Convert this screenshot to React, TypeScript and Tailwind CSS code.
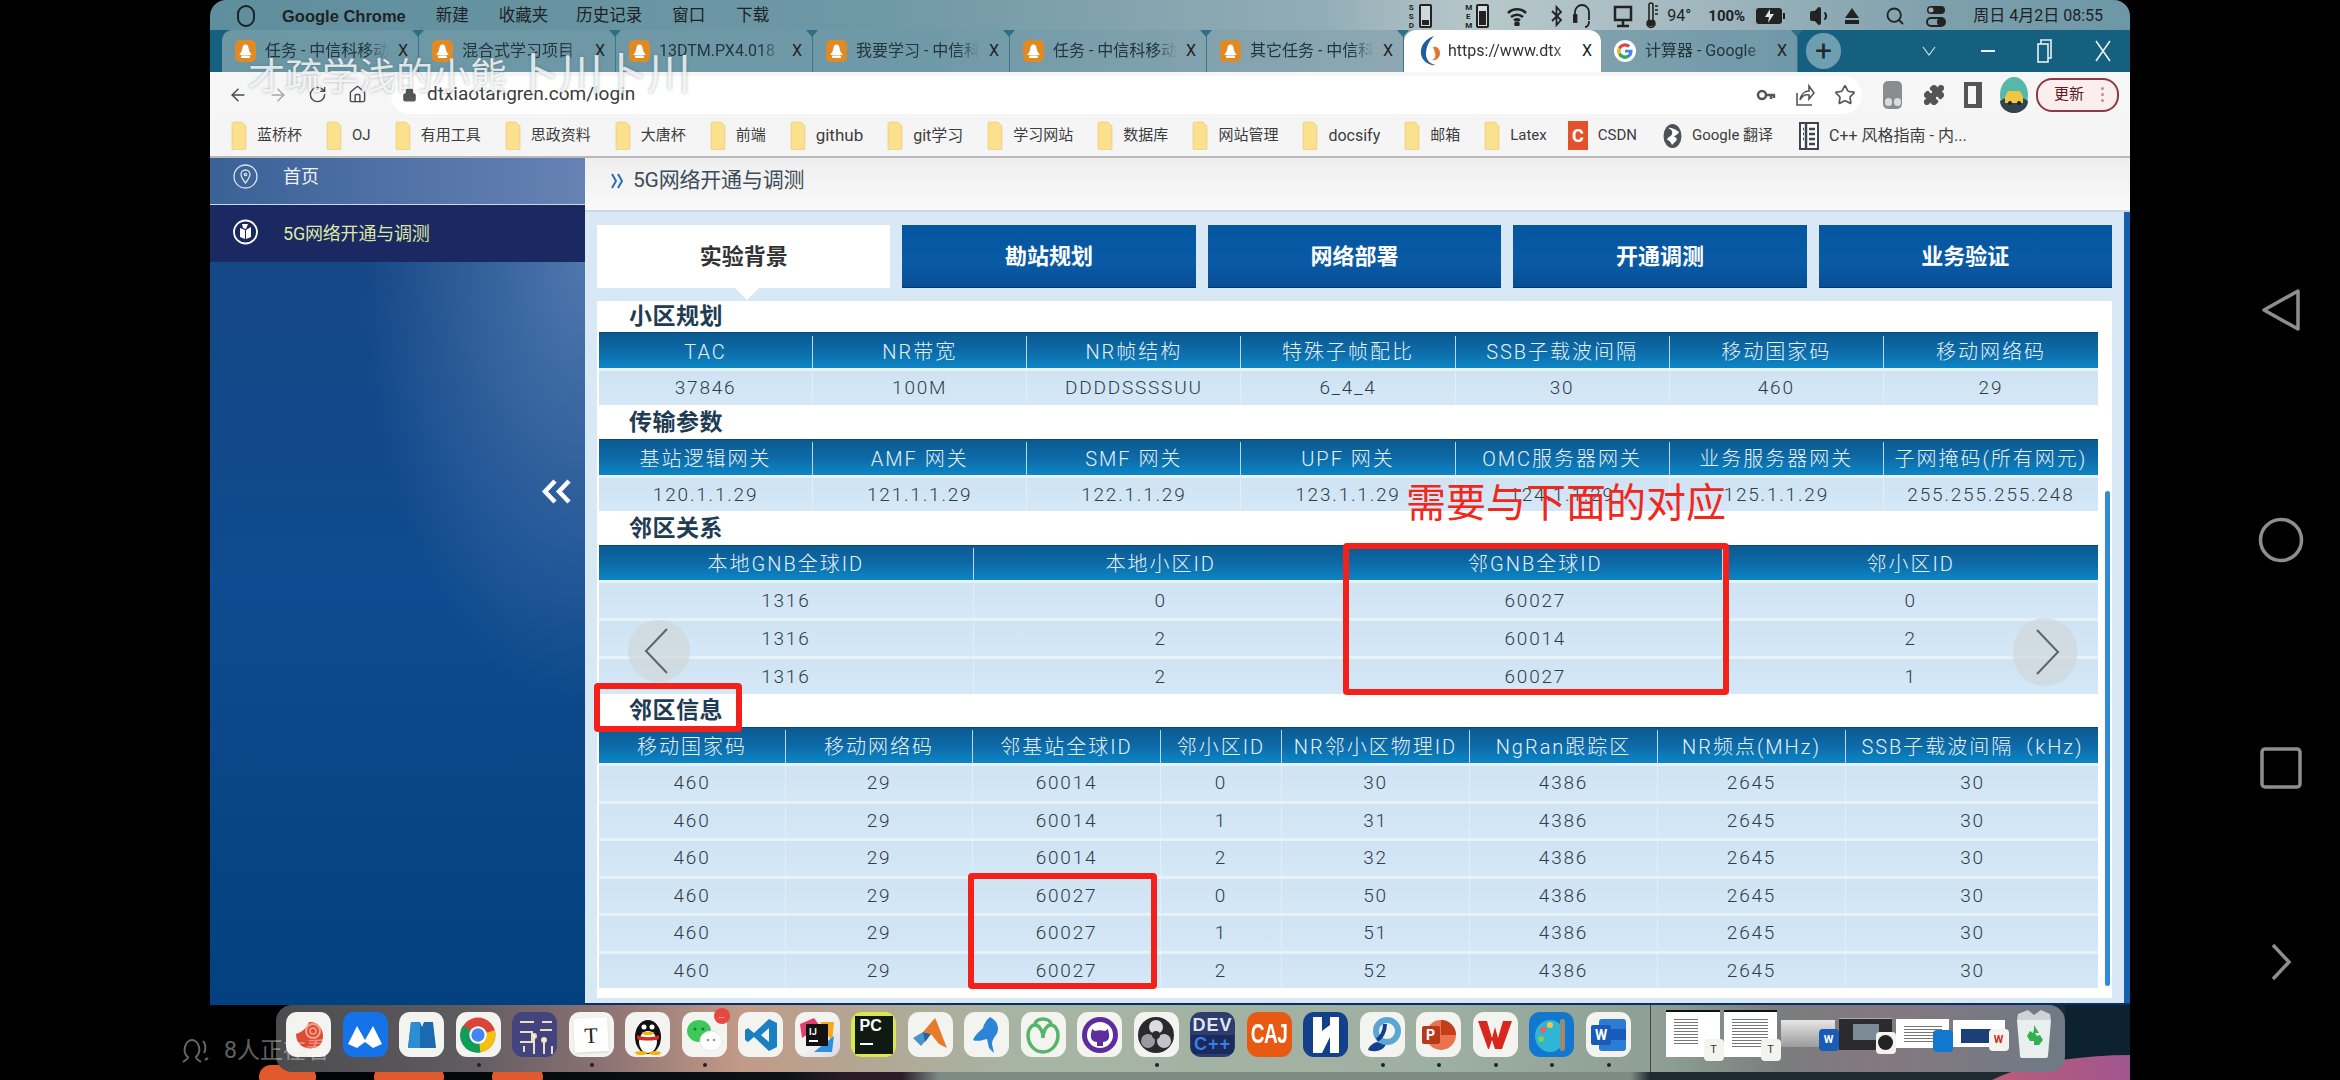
import React from "react";
import { ArrowLeft, ArrowRight, RotateCw, Home, Lock, Star, Puzzle, Search, Volume1 } from "lucide-react";

const Bell = () => (
  <span className="w-[21px] h-[22px] rounded-[5px] bg-[#df8a22] flex items-center justify-center shrink-0">
    <svg width="17" height="17" viewBox="0 0 17 17"><path d="M8.5 1.5c2 0 3 2 3.3 4.5.3 2.500 1.600 4 3 6H2.200c1.400-2 2.700-3.500 3-6 .3-2.500 1.300-4.500 3.300-4.500z" fill="#fff" /><rect x="4" y="12.500" width="9" height="2.500" rx="1" fill="#fff" /></svg>
  </span>
);

const SwirlLogo = () => (
  <svg width="22" height="34" viewBox="0 0 22 34" className="shrink-0">
    <path d="M15 2C6 5 1 12 2 20c1 7 8 12 15 11-6-1-10-5-10-11 0-7 3-13 8-18z" fill="#1f5f9e" />
    <path d="M14 13c4-1 7 2 7 6 0 5-4 8-8 7 3-1 4-4 3-7-.5-2-1-4-2-6z" fill="#e4762b" />
  </svg>
);

const GoogleG = ({ s = 22 }: { s?: number }) => (
  <svg width={s} height={s} viewBox="0 0 24 24" className="shrink-0">
    <circle cx="12" cy="12" r="12" fill="#fff" />
    <path d="M20 10.500h-8v3.200h4.600c-.6 2-2.300 3.300-4.600 3.300a5 5 0 1 1 3.200-8.800l2.300-2.300A8.300 8.300 0 1 0 20.300 12c0-.5 0-1-.3-1.500z" fill="#4285f4" />
    <path d="M4.600 8l2.700 2A5 5 0 0 1 15.200 8.200l2.300-2.300A8.300 8.300 0 0 0 4.600 8z" fill="#ea4335" />
    <path d="M4.600 16l2.700-2a5 5 0 0 0 7.600 2.300l2.500 2A8.300 8.300 0 0 1 4.600 16z" fill="#34a853" />
    <path d="M3.700 12c0-1.500.4-2.900.9-4l2.700 2a5 5 0 0 0 0 4l-2.700 2a8.300 8.300 0 0 1-.9-4z" fill="#fbbc05" />
  </svg>
);

const tabs: { title: string; icon: React.ReactNode; active?: boolean }[] = [
  { title: "任务 - 中信科移动", icon: <Bell /> },
  { title: "混合式学习项目", icon: <Bell /> },
  { title: "13DTM.PX4.018", icon: <Bell /> },
  { title: "我要学习 - 中信科", icon: <Bell /> },
  { title: "任务 - 中信科移动", icon: <Bell /> },
  { title: "其它任务 - 中信科", icon: <Bell /> },
  { title: "https://www.dtx", icon: <SwirlLogo />, active: true },
  { title: "计算器 - Google", icon: <GoogleG /> },
];

const Folder = () => (
  <svg width="16" height="29" viewBox="0 0 16 29" className="shrink-0">
    <path d="M1 2.500A1.500 1.500 0 0 1 2.500 1H11l4 4v22.500a1 1 0 0 1-1 1H2a1 1 0 0 1-1-1z" fill="#fbe08e" stroke="#e6c873" strokeWidth="0.6" />
  </svg>
);

const bookmarks: { t: string; c?: string }[] = [
  { t: "蓝桥杯" }, { t: "OJ" }, { t: "有用工具" }, { t: "思政资料" }, { t: "大唐杯" }, { t: "前端" },
  { t: "github", c: "text-[17px]" }, { t: "git学习", c: "text-[16px]" }, { t: "学习网站" }, { t: "数据库" }, { t: "网站管理" },
  { t: "docsify", c: "text-[16px]" }, { t: "邮箱" }, { t: "Latex" },
];

const Bookmarks = () => (
  <div className="h-[43px] bg-[#f5f5f5] border-b-2 border-[#b9b9b9] flex items-center pl-[21px] gap-[24px] text-[15px] text-[#3d3d3d] overflow-hidden whitespace-nowrap">
    {bookmarks.map((b) => (
      <div key={b.t} className="flex items-center gap-[10px]">
        <Folder />
        <span className={b.c}>{b.t}</span>
      </div>
    ))}
    <div className="flex items-center gap-[10px] -ml-[3px]">
      <span className="w-[20px] h-[29px] bg-[#e2532c] text-white text-[18px] font-bold flex items-center justify-center">C</span>
      <span>CSDN</span>
    </div>
    <div className="flex items-center gap-[10px] ml-[2px]">
      <svg width="19" height="26" viewBox="0 0 19 26"><ellipse cx="9.500" cy="13" rx="9" ry="12" fill="#4d5257" /><path d="M5 5c3 1 5 3 4 6s-4 2-5 6c2 0 4 2 5 5l4-4c2-2 0-4-2-4 1-2 4-2 5-5-3-2-7-5-11-4z" fill="#fff" /></svg>
      <span>Google 翻译</span>
    </div>
    <div className="flex items-center gap-[10px] ml-[2px]">
      <svg width="20" height="28" viewBox="0 0 20 28"><rect x="1" y="1" width="18" height="26" fill="#fff" stroke="#3c4650" strokeWidth="2" /><path d="M7 1v26M4 7h1M4 12h1M4 17h1M10 7h6M10 12h6M10 17h6M10 22h6" stroke="#3c4650" strokeWidth="2.500" /></svg>
      <span className="text-[16px]">C++ 风格指南 - 内...</span>
    </div>
  </div>
);

const StatusBar = ({ label, fill }: { label: string; fill: string }) => (
  <div className="flex items-center gap-[5px]">
    <span className="text-[8px] leading-[9px] font-bold w-[6px] text-center whitespace-pre-line">{label}</span>
    <span className="w-[13px] h-[24px] border-2 border-[#222] rounded-[2px] flex items-end bg-white/40 p-[1px]">
      <span className={`w-full bg-[#222] ${fill}`} />
    </span>
  </div>
);

const MenuBar = () => (
  <div className="h-[30px] flex items-center pl-[27px] pr-[27px] text-[16.500px] text-[#1c2225] bg-[linear-gradient(90deg,#5f8e9c_0%,#6f98a5_35%,#93adb6_58%,#b7c8cb_66%,#a8bcc2_75%,#7ea0ac_90%,#6d97a6_100%)] whitespace-nowrap rounded-t-[16px] pt-[2px]">
    <span className="w-[18px] h-[22px] rounded-full border-2 border-[#1c2225] shrink-0" />
    <span className="ml-[27px] font-bold text-[16.500px] [font-family:'Liberation_Sans',sans-serif]">Google Chrome</span>
    <span className="ml-[30px]">新建</span>
    <span className="ml-[30px]">收藏夹</span>
    <span className="ml-[28px]">历史记录</span>
    <span className="ml-[30px]">窗口</span>
    <span className="ml-[31px]">下载</span>
    <div className="ml-auto flex items-center text-[16px]">
      <StatusBar label={"S\nS\nD"} fill="h-[5px]" />
      <div className="ml-[33px]"><StatusBar label={"M\nE\nM"} fill="h-[14px]" /></div>
      <svg className="ml-[18px]" width="20" height="20" viewBox="0 0 20 20" fill="none" stroke="#222" strokeWidth="2.500"><path d="M1 7c5-5 13-5 18 0M4 11c3.500-3 8.500-3 12 0M7 14.500c2-1.500 4-1.500 6 0" /><circle cx="10" cy="18" r="1.500" fill="#222" /></svg>
      <svg className="ml-[24px]" width="11" height="22" viewBox="0 0 11 22" fill="none" stroke="#222" strokeWidth="1.800"><path d="M1 6l9 9-4.500 5V2L10 7l-9 9" /></svg>
      <svg className="ml-[11px]" width="18" height="28" viewBox="0 0 18 28" fill="none" stroke="#222" strokeWidth="1.800"><path d="M2 18V10a7 7 0 0 1 14 0v8M12 25c3 0 4-2 4-6" /><rect x="0.500" y="13" width="3" height="7" fill="#222" /></svg>
      <svg className="ml-[22px]" width="20" height="24" viewBox="0 0 20 24" fill="none" stroke="#222" strokeWidth="2.500"><rect x="2" y="3" width="16" height="13" /><path d="M10 16v5M4 22h12" /></svg>
      <svg className="ml-[12px]" width="14" height="28" viewBox="0 0 14 28" fill="none" stroke="#222" strokeWidth="1.600"><path d="M4 3a2 2 0 0 1 4 0v15a4 4 0 1 1-4 0z" /><circle cx="6" cy="21" r="2.500" fill="#222" /><path d="M10 4h3M10 8h3M10 12h3" /></svg>
      <span className="ml-[8px] text-[16px]">94°</span>
      <span className="ml-[17px] font-bold text-[15px]">100%</span>
      <svg className="ml-[11px]" width="30" height="18" viewBox="0 0 30 18"><rect x="0" y="1" width="26" height="16" rx="3" fill="#222" /><rect x="27" y="6" width="2" height="6" fill="#222" /><path d="M14 2l-5 8h4l-1 6 6-9h-4z" fill="#d9e2e4" /></svg>
      <Volume1 className="ml-[23px]" size={24} color="#222" fill="#222" />
      <svg className="ml-[11px]" width="16" height="18" viewBox="0 0 16 18"><path d="M8 1l7 10H1z" fill="#222" /><rect x="1" y="13" width="14" height="4" fill="#222" /></svg>
      <Search className="ml-[25px]" size={20} color="#222" strokeWidth={2.200} />
      <svg className="ml-[21px]" width="20" height="24" viewBox="0 0 20 24"><rect x="1" y="2" width="18" height="8" rx="4" fill="#222" /><rect x="1" y="14" width="18" height="8" rx="4" fill="none" stroke="#222" strokeWidth="2" /><circle cx="15" cy="18" r="4" fill="#222" /><circle cx="5" cy="6" r="2.500" fill="#aaa" /></svg>
      <span className="ml-[27px] text-[16px]">周日 4月2日 08:55</span>
    </div>
  </div>
);

const TabStrip = () => (
  <div className="h-[42px] flex items-stretch pl-[12px] bg-[#14607e]">
    <div className="flex bg-[linear-gradient(90deg,#6c97a5_0%,#7099a7_45%,#8da8b2_74%,#8da8b2_76%,#6f98a8_100%)] rounded-tl-[10px]">
      {tabs.map((t) => (
        <div
          key={t.title}
          className={
            t.active
              ? "w-[197px] flex items-center pl-[15px] pr-[9px] gap-[7px] text-[16px] bg-white text-[#333] rounded-t-[12px] whitespace-nowrap"
              : "relative w-[197px] flex items-center pl-[13px] pr-[10px] gap-[9px] text-[16px] text-[#23353d] border-r border-[#3c7489] whitespace-nowrap"
          }
        >
          {t.icon}
          <span className="flex-1 overflow-hidden [mask-image:linear-gradient(90deg,#000_82%,transparent)]">{t.title}</span>
          <span className="text-[16px] text-[#222]">X</span>
          {!t.active && <span className="absolute right-[-6px] top-0 w-0 h-0 border-l-[6px] border-r-[6px] border-t-[7px] border-l-transparent border-r-transparent border-t-[#2d6f88]" />}
        </div>
      ))}
    </div>
    <div className="ml-[8px] my-[3px] w-[35px] rounded-full bg-[#6e9fb0] flex items-center justify-center text-[30px] leading-none text-[#1c2a30]">+</div>
    <div className="ml-auto flex items-center pr-[19px]">
      <svg width="14" height="10" viewBox="0 0 14 10" fill="none" stroke="#cfe0e6" strokeWidth="1.200"><path d="M1 1l6 8 6-8" /></svg>
      <span className="ml-[45px] w-[14px] h-[2px] bg-[#e8f1f4]" />
      <svg className="ml-[42px]" width="15" height="24" viewBox="0 0 15 24" fill="none" stroke="#e8f1f4" strokeWidth="1.600"><rect x="1" y="5" width="10" height="18" /><path d="M4 5V1h10v18h-3" /></svg>
      <svg className="ml-[43px]" width="16" height="22" viewBox="0 0 16 22" fill="none" stroke="#e8f1f4" strokeWidth="1.600"><path d="M1 1l14 20M15 1L1 21" /></svg>
    </div>
  </div>
);

const Toolbar = () => (
  <div className="h-[43px] bg-[#f6f6f6] flex items-center pt-[2px]">
    <ArrowLeft className="ml-[18px]" size={20} color="#4a4a4a" strokeWidth={1.800} />
    <ArrowRight className="ml-[20px]" size={20} color="#a8a8a8" strokeWidth={1.800} />
    <RotateCw className="ml-[20px]" size={19} color="#4a4a4a" strokeWidth={1.800} />
    <Home className="ml-[21px]" size={19} color="#4a4a4a" strokeWidth={1.800} />
    <div className="ml-[24px] h-[38px] w-[1471px] bg-white rounded-full flex items-center pl-[11px] pr-[6px]">
      <Lock size={15} color="#555" fill="#555" />
      <span className="ml-[10px] text-[19px] text-[#3b3b3b]">dtxiaotangren.com/login</span>
      <div className="ml-auto flex items-center gap-[19px]">
        <svg width="20" height="14" viewBox="0 0 20 14" fill="none" stroke="#555" strokeWidth="2.500"><circle cx="6" cy="7" r="4" /><path d="M10 7h9M15 7v4M18 7v3" /></svg>
        <svg width="20" height="24" viewBox="0 0 20 24" fill="none" stroke="#555" strokeWidth="1.600"><path d="M2 10v12h15M5 17c1-6 5-9 9-9V3l5 7-5 6v-4c-4-1-7 1-9 5z" /></svg>
        <Star size={22} color="#555" strokeWidth={1.800} />
      </div>
    </div>
    <div className="ml-[21px] w-[19px] h-[28px] rounded-[5px] bg-[#8a8d90] flex items-end justify-center pb-[3px] gap-[2px] shrink-0">
      <span className="w-[7px] h-[8px] rounded-full bg-[#dcdcdc]" />
      <span className="w-[7px] h-[8px] rounded-full bg-[#dcdcdc]" />
    </div>
    <Puzzle className="ml-[21px] shrink-0" size={22} color="#555" fill="#555" />
    <span className="ml-[19px] w-[18px] h-[26px] border-[4px] border-[#555] border-r-[6px] shrink-0" />
    <svg className="ml-[18px] shrink-0" width="28" height="36" viewBox="0 0 28 36">
      <ellipse cx="14" cy="18" rx="14" ry="18" fill="#56b8a8" />
      <path d="M0 24c8-6 20-6 28 0 0 6-6 12-14 12S0 30 0 24z" fill="#33434d" />
      <path d="M5 20l3-6h12l3 6v6H5z" fill="#f0c53f" />
      <circle cx="10" cy="26" r="2" fill="#222" /><circle cx="19" cy="26" r="2" fill="#222" />
    </svg>
    <div className="ml-[8px] w-[83px] h-[34px] rounded-[16px] border-2 border-[#8d3a48] bg-[#fbeeee] flex items-center pl-[16px] text-[15px] text-[#5c1b25] shrink-0">
      更新
      <span className="ml-[17px] flex flex-col gap-[3px]">
        <span className="w-[3px] h-[3px] rounded-full bg-[#c98a90]" />
        <span className="w-[3px] h-[3px] rounded-full bg-[#c98a90]" />
        <span className="w-[3px] h-[3px] rounded-full bg-[#c98a90]" />
      </span>
    </div>
  </div>
);

const Sidebar = () => (
  <aside className="w-[375px] shrink-0 relative bg-[radial-gradient(ellipse_at_100%_12%,#4f77ad_0%,transparent_42%),linear-gradient(180deg,#174682_0%,#0f4b90_50%,#03407f_100%)]">
    <div className="h-[47px] flex items-center pl-[23px] gap-[25px] bg-[linear-gradient(90deg,#3a6196,#6782b5)] border-b border-[#cfd9ea] pb-[9px]">
      <svg width="25" height="25" viewBox="0 0 25 25" fill="none" stroke="#d9e3f0" strokeWidth="1.300" className="shrink-0">
        <circle cx="12.500" cy="12.500" r="11.500" />
        <path d="M12.500 19c-3-4-4.500-6-4.500-8.500a4.500 4.500 0 0 1 9 0c0 2.500-1.500 4.500-4.500 8.500z" />
        <circle cx="12.500" cy="10.500" r="1.200" />
      </svg>
      <span className="text-[18px] text-[#eef3f9]">首页</span>
    </div>
    <div className="h-[57px] flex items-center pl-[23px] gap-[25px] bg-[#1a2962]">
      <svg width="25" height="26" viewBox="0 0 25 26" className="shrink-0 -mt-[3px]">
        <circle cx="12.500" cy="13" r="11.500" fill="#1a2962" stroke="#fff" strokeWidth="1.800" />
        <path d="M7 9l5 2v9l-5-2zM13 11l5-3v10l-5 2z" fill="#fff" />
        <path d="M9 5h6l-2 5-3-1z" fill="#fff" />
      </svg>
      <span className="text-[18px] text-[#dfe7a5] -tracking-[0.2px]">5G网络开通与调测</span>
    </div>
    <svg className="absolute left-[331px] top-[321px]" width="31" height="25" viewBox="0 0 31 25" fill="none" stroke="#fff" strokeWidth="4.500">
      <path d="M14 2L4 12.500 14 23M28 2L18 12.500 28 23" />
    </svg>
  </aside>
);

const DataTable = ({ cols, head, rows, rowClass, headClass }: { cols: string; head: string[]; rows: string[][]; rowClass: string; headClass: string }) => (
  <div className="text-center">
    <div className={`grid ${cols} ${headClass} text-[20px] tracking-[2px] border-t border-[#0b4a78] bg-[linear-gradient(180deg,#0b5a92_0%,#0d6aa6_50%,#0c86c6_100%)] text-[#e4f1fa]`}>
      {head.map((h) => (
        <div key={h} className="flex items-center justify-center border-r border-[#bcd9ea] last:border-r-0 whitespace-nowrap font-light">{h}</div>
      ))}
    </div>
    {rows.map((r, i) => (
      <div key={i} className={`grid ${cols} ${rowClass} text-[19px] tracking-[1.800px] font-light text-[#2f3d49] bg-[linear-gradient(180deg,#cfe3f2_0%,#d5e8f7_100%)] border-t-[3px] border-[#e6f1f8]`}>
        {r.map((c, j) => (
          <div key={j} className="flex items-center justify-center border-r border-[#e2eff8] last:border-r-0">{c}</div>
        ))}
      </div>
    ))}
  </div>
);

const SectionTitle = ({ text, h }: { text: string; h: string }) => (
  <div className={`${h} flex items-center pl-[30px] pt-[2px] text-[23px] font-bold text-[#203b52] tracking-[0.5px]`}>{text}</div>
);

const Carousel = ({ side }: { side: "l" | "r" }) => (
  <div className={side === "l" ? "absolute left-[31px] top-[319px] w-[62px] h-[62px] rounded-full bg-[#cfd3d6]/60 flex items-center justify-center pr-[6px]" : "absolute left-[1416px] top-[317px] w-[64px] h-[68px] rounded-full bg-[#cfd3d6]/60 flex items-center justify-center pl-[6px]"}>
    <svg width="26" height="46" viewBox="0 0 26 46" fill="none" stroke="#5e6469" strokeWidth="2">
      <path d={side === "l" ? "M24 1L3 23l21 22" : "M2 1l21 22L2 45"} />
    </svg>
  </div>
);

const tabNames = ["实验背景", "勘站规划", "网络部署", "开通调测", "业务验证"];

const row4 = (a: string, b: string, c: string) => ["460", "29", a, b, c, "4386", "2645", "30"];

const Main = () => (
  <main className="flex-1 flex flex-col min-w-0">
    <div className="h-[54px] shrink-0 flex items-center pl-[26px] bg-[linear-gradient(180deg,#efefef_0%,#f5f5f5_65%,#fafafa_100%)] border-b-2 border-[#cdd7df] pb-[6px]">
      <svg width="13" height="16" viewBox="0 0 13 16" fill="none" stroke="#2a6fb4" strokeWidth="2"><path d="M1 1l4 7-4 7M7 1l4 7-4 7" /></svg>
      <span className="ml-[9px] text-[21px] text-[#3d4c58] -tracking-[0.2px]">5G网络开通与调测</span>
    </div>
    <div className="flex-1 flex flex-col bg-[#d8e8f5] border-r-[6px] border-[#1260ae] pl-[12px] pr-[12px] pt-[13px] pb-[5px] min-h-0">
      <div className="h-[63px] shrink-0 flex gap-[12px] relative">
        {tabNames.map((t, i) => (
          <div key={t} className={i === 0 ? "flex-1 bg-white flex items-center justify-center text-[22px] font-bold text-[#333]" : "flex-1 bg-[linear-gradient(180deg,#04569f,#0a5aa6_60%,#084f95)] border-b border-[#073a6c] flex items-center justify-center text-[22px] font-bold text-white"}>{t}</div>
        ))}
        <span className="absolute left-[138px] top-[63px] w-0 h-0 border-l-[12px] border-r-[12px] border-t-[12px] border-l-transparent border-r-transparent border-t-white" />
      </div>
      <div className="mt-[13px] flex-1 bg-white pl-[2px] pr-[14px] relative">
        <SectionTitle text="小区规划" h="h-[31px]" />
        <DataTable cols="grid-cols-7" headClass="h-[36px] pt-[3px]" rowClass="h-[37px] pt-[1px]" head={["TAC", "NR带宽", "NR帧结构", "特殊子帧配比", "SSB子载波间隔", "移动国家码", "移动网络码"]} rows={[["37846", "100M", "DDDDSSSSUU", "6_4_4", "30", "460", "29"]]} />
        <SectionTitle text="传输参数" h="h-[34px]" />
        <DataTable cols="grid-cols-7" headClass="h-[36px] pt-[2px]" rowClass="h-[36px] pt-[1px]" head={["基站逻辑网关", "AMF 网关", "SMF 网关", "UPF 网关", "OMC服务器网关", "业务服务器网关", "子网掩码(所有网元)"]} rows={[["120.1.1.29", "121.1.1.29", "122.1.1.29", "123.1.1.29", "124.1.1.29", "125.1.1.29", "255.255.255.248"]]} />
        <SectionTitle text="邻区关系" h="h-[34px]" />
        <DataTable cols="grid-cols-4" headClass="h-[35px] pt-[2px]" rowClass="h-[38px] pt-[1px]" head={["本地GNB全球ID", "本地小区ID", "邻GNB全球ID", "邻小区ID"]} rows={[["1316", "0", "60027", "0"], ["1316", "2", "60014", "2"], ["1316", "2", "60027", "1"]]} />
        <SectionTitle text="邻区信息" h="h-[33px]" />
        <DataTable
          cols="grid-cols-[187px_187px_188px_121px_188px_188px_188px_253px]"
          headClass="h-[36px] pt-[2px]"
          rowClass="h-[37.5px]"
          head={["移动国家码", "移动网络码", "邻基站全球ID", "邻小区ID", "NR邻小区物理ID", "NgRan跟踪区", "NR频点(MHz)", "SSB子载波间隔（kHz)"]}
          rows={[row4("60014", "0", "30"), row4("60014", "1", "31"), row4("60014", "2", "32"), row4("60027", "0", "50"), row4("60027", "1", "51"), row4("60027", "2", "52")]}
        />
        <Carousel side="l" />
        <Carousel side="r" />
        <span className="absolute right-[2px] top-[190px] bottom-[12px] w-[5px] rounded-full bg-[#2f8ad8]" />
      </div>
    </div>
    <div className="h-[2px] bg-[#0a2f66] shrink-0" />
  </main>
);

const Tile = ({ children, bg = "bg-[#f3f3f0]" }: { children: React.ReactNode; bg?: string }) => (
  <div className={`w-[45px] h-[45px] rounded-[11px] ${bg} shrink-0 flex items-center justify-center overflow-hidden`}>{children}</div>
);

const dockIcons: { el: React.ReactNode; dot?: boolean }[] = [
  { el: <Tile><svg width="38" height="38" viewBox="0 0 38 38"><path d="M6 18c0 10 8 16 18 14 6-1 9-6 9-12 0-9-7-15-14-14-2 6-7 10-13 12z" fill="#dd4b33" /><circle cx="23" cy="15" r="7" fill="none" stroke="#f3a48f" strokeWidth="2" /><circle cx="23" cy="15" r="3" fill="none" stroke="#f3a48f" strokeWidth="1.500" /></svg></Tile> },
  { el: <Tile bg="bg-[#1473e8]"><svg width="38" height="30" viewBox="0 0 38 30"><path d="M2 24L11 6l8 14 8-14 9 18-9 4-8-6-8 6z" fill="#fff" /></svg></Tile> },
  { el: <Tile><svg width="34" height="34" viewBox="0 0 34 34"><path d="M6 4h9l2 5 2-5h9l3 26H3z" fill="#1a6ab0" /><path d="M6 4h9v26H3z" fill="#2d8dd3" /></svg></Tile> },
  { el: <Tile><svg width="38" height="38" viewBox="0 0 24 24"><circle cx="12" cy="12" r="11" fill="#db4437" /><path d="M12 12L22.500 9a11 11 0 0 1-9 14z" fill="#f4c20d" /><path d="M12 12l1.500 11A11 11 0 0 1 2.500 6z" fill="#0f9d58" /><circle cx="12" cy="12" r="5.500" fill="#fff" /><circle cx="12" cy="12" r="4.200" fill="#4285f4" /></svg></Tile>, dot: true },
  { el: <Tile bg="bg-[#43447e]"><svg width="45" height="45" viewBox="0 0 45 45" stroke="#e9dfc8" strokeWidth="2" fill="none"><path d="M8 10h14M30 10h10M8 20h12v10H8M28 18h12M12 40V34M22 42V26M32 42V30M40 42V34" /><circle cx="22" cy="24" r="2" fill="#fff" /><circle cx="32" cy="28" r="2" fill="#fff" /></svg></Tile> },
  { el: <Tile><div className="w-[34px] h-[34px] bg-white shadow rotate-[-3deg] flex items-center justify-center text-[22px] text-[#222] [font-family:'Liberation_Serif',serif]">T</div></Tile>, dot: true },
  { el: <Tile><svg width="36" height="40" viewBox="0 0 36 40"><ellipse cx="18" cy="22" rx="13" ry="17" fill="#111" /><ellipse cx="18" cy="27" rx="9" ry="11" fill="#fff" /><circle cx="14" cy="12" r="2.500" fill="#fff" /><circle cx="22" cy="12" r="2.500" fill="#fff" /><path d="M12 17h12l-2 3h-8z" fill="#f4b400" /><path d="M7 20c6 3 16 3 22 0v4c-6 2-16 2-22 0z" fill="#d9281e" /><ellipse cx="11" cy="38" rx="6" ry="2" fill="#f4b400" /><ellipse cx="25" cy="38" rx="6" ry="2" fill="#f4b400" /></svg></Tile> },
  { el: <Tile><svg width="40" height="40" viewBox="0 0 40 40"><ellipse cx="15" cy="16" rx="12" ry="11" fill="#3ec85a" /><circle cx="11" cy="14" r="1.500" fill="#1c7a34" /><circle cx="19" cy="14" r="1.500" fill="#1c7a34" /><ellipse cx="27" cy="26" rx="11" ry="10" fill="#fff" stroke="#e6e6e6" /><circle cx="24" cy="25" r="1.300" fill="#999" /><circle cx="30" cy="25" r="1.300" fill="#999" /></svg></Tile>, dot: true },
  { el: <Tile><svg width="36" height="36" viewBox="0 0 36 36"><path d="M26 2l8 4v24l-8 4L11 20l-6 5-3-2v-10l3-2 6 5zM26 11l-8 7 8 7z" fill="#1b7fc4" fillRule="evenodd" /></svg></Tile> },
  { el: <Tile bg="bg-[linear-gradient(135deg,#f3f3f0_50%,#d8d8e6)]"><svg width="38" height="38" viewBox="0 0 38 38"><path d="M2 8l14-6 6 8-18 12z" fill="#e23f6b" /><path d="M36 6l-14 0 12 20z" fill="#f5a623" /><path d="M36 20L16 36h18z" fill="#2f8fe0" /><rect x="8" y="8" width="22" height="22" fill="#111" /><text x="11" y="19" fontSize="9" fontWeight="700" fill="#fff">IJ</text><rect x="11" y="24" width="9" height="2" fill="#fff" /></svg></Tile> },
  { el: <Tile bg="bg-[#d9e84a]"><div className="w-[38px] h-[38px] bg-[#0e1a12] flex flex-col px-[5px] pt-[1px] text-white text-[16px] font-bold leading-[18px] [font-family:'Liberation_Sans',sans-serif]">PC<span className="mt-[8px] w-[13px] h-[2px] bg-white" /></div></Tile> },
  { el: <Tile><svg width="38" height="38" viewBox="0 0 38 38"><path d="M2 22l10-6 5 6-7 8z" fill="#4a94c9" /><path d="M12 16L24 2c3 6 7 18 12 30l-8-4-8-10z" fill="#e87a2a" /><path d="M12 16l8 2-6 8z" fill="#2a5f9a" /></svg></Tile> },
  { el: <Tile><svg width="34" height="40" viewBox="0 0 34 40"><path d="M20 2c8 4 10 12 6 18-2 3-4 5-4 9l2 9-5-5-2-9c-4 1-10 3-14 1 2-5 7-9 10-12 1-4 3-8 7-11z" fill="#2a84d8" /></svg></Tile> },
  { el: <Tile><svg width="36" height="38" viewBox="0 0 36 38" fill="none" stroke="#55b56a" strokeWidth="3.500"><path d="M18 36c-7 0-15-6-15-17 0-5 3-10 7-10 5 0 8 7 8 13 0-6 3-13 8-13 4 0 7 5 7 10 0 11-8 17-15 17z" /><path d="M10 9c0-4 4-6 8-6s8 2 8 6" /></svg></Tile> },
  { el: <Tile><svg width="38" height="38" viewBox="0 0 38 38"><circle cx="19" cy="19" r="18" fill="#5e2d9c" /><circle cx="19" cy="19" r="13" fill="#fff" /><path d="M11 13l3 2c3-1 7-1 10 0l3-2 1 5c1 5-2 8-6 8v4h-6v-4c-4 0-7-3-6-8z" fill="#5e2d9c" /></svg></Tile> },
  { el: <Tile><svg width="38" height="38" viewBox="0 0 38 38"><circle cx="19" cy="19" r="18" fill="#2a2a2e" /><circle cx="19" cy="11" r="7" fill="#dcdcdc" /><circle cx="11" cy="25" r="7" fill="#9a9a9e" /><circle cx="27" cy="25" r="7" fill="#c4c4c8" /><circle cx="19" cy="19" r="4" fill="#2a2a2e" /></svg></Tile>, dot: true },
  { el: <Tile bg="bg-[#2d3d6e]"><div className="flex flex-col items-center leading-[19px] font-bold [font-family:'Liberation_Sans',sans-serif]"><span className="text-[18px] text-[#dfe6f3] tracking-[1px]">DEV</span><span className="text-[18px] text-[#3a7fe0] tracking-[1px] bg-[#1a2a5c] px-[3px]">C++</span></div></Tile> },
  { el: <Tile bg="bg-[#e85a12]"><span className="text-white font-bold text-[19px] [font-family:'Liberation_Sans',sans-serif] scale-y-150 tracking-[-0.5px]">CAJ</span></Tile> },
  { el: <Tile bg="bg-[#12408a]"><svg width="34" height="40" viewBox="0 0 34 40"><path d="M4 2h9v14l8-6V2h9v36h-9V22l-8 16H4z" fill="#fff" /></svg></Tile> },
  { el: <Tile><svg width="38" height="38" viewBox="0 0 38 38"><path d="M5 34c8 3 16 0 18-6l-9-2c-4 1-8 4-9 8z" fill="#13408c" /><circle cx="24" cy="15" r="11" fill="none" stroke="#5aa7d6" strokeWidth="6" /><path d="M14 24c4-2 8-8 8-16" stroke="#13408c" strokeWidth="4" fill="none" /></svg></Tile>, dot: true },
  { el: <Tile><svg width="38" height="38" viewBox="0 0 38 38"><circle cx="21" cy="19" r="15" fill="#e8734e" /><path d="M21 4a15 15 0 0 1 15 15H21z" fill="#c43e1c" /><rect x="2" y="10" width="18" height="18" rx="2" fill="#b7381a" /><text x="6" y="24" fontSize="14" fontWeight="700" fill="#fff">P</text></svg></Tile>, dot: true },
  { el: <Tile><svg width="38" height="34" viewBox="0 0 38 34"><path d="M2 3h9l5 17 3-11 3 11 5-17h9l-10 28h-7l-3-9-3 9H12z" fill="#d8281e" /></svg></Tile>, dot: true },
  { el: <Tile bg="bg-[#1278cf]"><svg width="40" height="40" viewBox="0 0 40 40"><ellipse cx="18" cy="21" rx="15" ry="16" fill="#2fb6d6" /><circle cx="11" cy="15" r="3" fill="#f25c5c" /><circle cx="18" cy="10" r="3" fill="#f6c744" /><circle cx="9" cy="24" r="3" fill="#7dd14b" /><rect x="28" y="4" width="5" height="32" rx="2" fill="#9a8a6f" /></svg></Tile>, dot: true },
  { el: <Tile><svg width="38" height="36" viewBox="0 0 38 36"><rect x="10" y="2" width="27" height="32" rx="3" fill="#2b7cd3" /><rect x="10" y="12" width="27" height="11" fill="#185abd" /><rect x="2" y="8" width="20" height="20" rx="2" fill="#1a5bb8" /><text x="6" y="23" fontSize="14" fontWeight="700" fill="#fff">W</text></svg></Tile>, dot: true },
];

const Thumb = ({ w, h, children, bg, badge }: { w: string; h: string; children?: React.ReactNode; bg: string; badge: React.ReactNode }) => (
  <div className={`${w} ${h} ${bg} relative shrink-0`}>
    {children}
    <span className="absolute right-[-4px] bottom-[-4px] w-[20px] h-[22px] rounded-[4px] bg-[#f3f3f0] flex items-center justify-center overflow-hidden text-[11px] text-[#333]">{badge}</span>
  </div>
);

const Lines = ({ n, w = "w-[24px]" }: { n: number; w?: string }) => (
  <div className="pt-[7px] pl-[8px] flex flex-col gap-[2px]">
    {Array.from({ length: n }).map((_, i) => <span key={i} className={`${w} h-[1px] bg-[#777]`} />)}
  </div>
);

const Dock = () => (
  <div className="h-[75px] shrink-0 relative overflow-hidden bg-[linear-gradient(90deg,#000_0%,#0a1216_30%,#2a1c28_33%,#2a1c28_36%,#7c8c84_38%,#7c8c84_74%,#1d2b30_75%,#1d2b30_100%)]">
    <div className="absolute left-0 top-0 w-[66px] h-[75px] bg-black" />
    <div className="absolute left-[1855px] top-0 w-[65px] h-[75px] bg-[#0c2230]" />
    <span className="absolute left-[49px] top-[60px] w-[57px] h-[24px] rounded-full bg-[#e2592e]" />
    <span className="absolute left-[164px] top-[60px] w-[70px] h-[24px] rounded-full bg-[#e2592e]" />
    <span className="absolute left-[282px] top-[60px] w-[51px] h-[24px] rounded-full bg-[#e2592e]" />
    <div className="absolute left-[1750px] top-[50px] w-[170px] h-[60px] rounded-tl-[100%] bg-[linear-gradient(90deg,#c25d74,#a0568e)]" />
    <div className="ml-[66px] w-[1789px] h-[67px] relative rounded-[16px] bg-[linear-gradient(90deg,#4c4c4e_0%,#5d5a60_10%,#8a7172_18%,#c29a88_26%,#b2a794_33%,#a7b5a4_42%,#9eb0a2_65%,#8c9d93_78%,#7a7d7e_84%,#857880_90%,#6e7a85_100%)] flex items-start pl-[10px] pt-[7px]">
      <div className="flex gap-[11.500px]">
        {dockIcons.map((d, i) => (
          <div key={i} className="relative">
            {d.el}
            {i === 7 && <span className="absolute right-[-3px] top-[-4px] w-[16px] h-[16px] rounded-full bg-[#e5483f] text-white text-[9px] flex items-center justify-center">…</span>}
            {d.dot && <span className="absolute left-[21px] top-[51px] w-[4px] h-[4px] rounded-full bg-[#222]" />}
          </div>
        ))}
      </div>
      <span className="ml-[19px] -mt-[7px] w-px h-[67px] bg-[#3f4a48]" />
      <div className="ml-[15px] flex items-center gap-[4px] h-[47px] -mt-[2px]">
        <Thumb w="w-[54px]" h="h-[47px]" bg="bg-white border-t-2 border-[#111]" badge="T"><Lines n={9} /></Thumb>
        <Thumb w="w-[53px]" h="h-[47px]" bg="bg-white border-t-2 border-[#111]" badge="T"><Lines n={10} w="w-[36px]" /></Thumb>
        <Thumb w="w-[54px]" h="h-[27px]" bg="bg-[linear-gradient(180deg,#e6e6e6,#9b9b9b)]" badge={<span className="w-full h-full bg-[#1a5bb8] text-white flex items-center justify-center font-bold">W</span>} />
        <Thumb w="w-[53px]" h="h-[32px]" bg="bg-[#2b2b2d] border-t border-[#aaa]" badge={<span className="w-[15px] h-[15px] rounded-full bg-[#222]" />}><div className="ml-[14px] mt-[5px] w-[26px] h-[16px] bg-[#7b8a96]" /></Thumb>
        <Thumb w="w-[53px]" h="h-[29px]" bg="bg-white" badge={<span className="w-full h-full bg-[#1278cf]" />}><Lines n={6} w="w-[38px]" /></Thumb>
        <Thumb w="w-[52px]" h="h-[27px]" bg="bg-white" badge={<span className="text-[#d8281e] font-bold">W</span>}><div className="ml-[8px] mt-[9px] w-[30px] h-[14px] bg-[#1c3f75]" /></Thumb>
      </div>
      <svg className="ml-[9px] shrink-0 -mt-[4px]" width="40" height="50" viewBox="0 0 40 50">
        <path d="M4 6l10-4 6 5 7-5 9 4 1 6H3z" fill="#cfd3d4" />
        <path d="M3 12h34l-3 36a2 2 0 0 1-2 2H8a2 2 0 0 1-2-2z" fill="#e9eeee" />
        <path d="M20 17l5 8h-4l2 3 3-1 3 5-4 5h-5v-4h-4l-3-5 3-5 3 2 1-4z" fill="#35b04f" />
      </svg>
    </div>
  </div>
);

const NavBar = () => (
  <div className="w-[210px] shrink-0 h-[1080px] flex flex-col items-center pl-[92px] pt-[288px]">
    <svg width="40" height="44" viewBox="0 0 40 44" fill="none" stroke="#8e8e8e" strokeWidth="3.500"><path d="M37 3v38L3 22z" strokeLinejoin="round" /></svg>
    <svg className="mt-[185px]" width="46" height="46" viewBox="0 0 46 46" fill="none" stroke="#8e8e8e" strokeWidth="3.500"><circle cx="23" cy="23" r="20.500" /></svg>
    <svg className="mt-[184px]" width="42" height="42" viewBox="0 0 42 42" fill="none" stroke="#8e8e8e" strokeWidth="3.500"><rect x="2" y="2" width="38" height="38" rx="3" /></svg>
    <svg className="mt-[154px]" width="22" height="38" viewBox="0 0 22 38" fill="none" stroke="#8e8e8e" strokeWidth="3.500"><path d="M3 2l16 17L3 36" /></svg>
  </div>
);

const RedBox = ({ cls }: { cls: string }) => <div className={`absolute border-[6px] border-[#f3211a] rounded-[4px] ${cls}`} />;

export default function App() {
  return (
    <div className="w-[2340px] h-[1080px] bg-black overflow-hidden relative flex [font-family:Roboto,'Noto_Sans_CJK_SC',sans-serif]">
      <div className="w-[210px] shrink-0" />
      <div className="w-[1920px] shrink-0 h-[1080px] flex flex-col">
        <div className="h-[1005px] shrink-0 flex flex-col">
          <MenuBar />
          <TabStrip />
          <Toolbar />
          <Bookmarks />
          <div className="flex-1 flex min-h-0">
            <Sidebar />
            <Main />
          </div>
        </div>
        <Dock />
      </div>
      <NavBar />

      <div className="absolute left-[248px] top-[50px] text-[37px] leading-[50px] text-white/80 whitespace-nowrap pointer-events-none [text-shadow:0_0_3px_rgba(60,80,90,0.45)]">才疏学浅的小熊<span className="ml-[8px] text-[44px]">卜川卜川</span></div>
      <RedBox cls="left-[1343px] top-[543px] w-[386px] h-[152px]" />
      <RedBox cls="left-[594px] top-[683px] w-[148px] h-[49px]" />
      <RedBox cls="left-[968px] top-[873px] w-[189px] h-[116px]" />
      <div className="absolute left-[1406px] top-[479px] text-[40px] leading-[50px] text-[#f1271c] whitespace-nowrap">需要与下面的对应</div>
      <div className="absolute left-[180px] top-[1036px] flex items-center gap-[8px] text-[23px] leading-[30px] text-white/40 whitespace-nowrap">
        <svg width="30" height="30" viewBox="0 0 30 30" fill="none" stroke="currentColor" strokeWidth="2"><path d="M3 26c2-2 5-2 5-5-3-2-4-6-3-10s4-7 7-7 6 3 7 7-1 8-3 10c0 3 3 3 5 5" /><path d="M23 5c3 3 3 9 1 12M25 24c1-1 2-1 3-2" /></svg>
        <span className="ml-[6px]">8人正在看</span>
      </div>
    </div>
  );
}
